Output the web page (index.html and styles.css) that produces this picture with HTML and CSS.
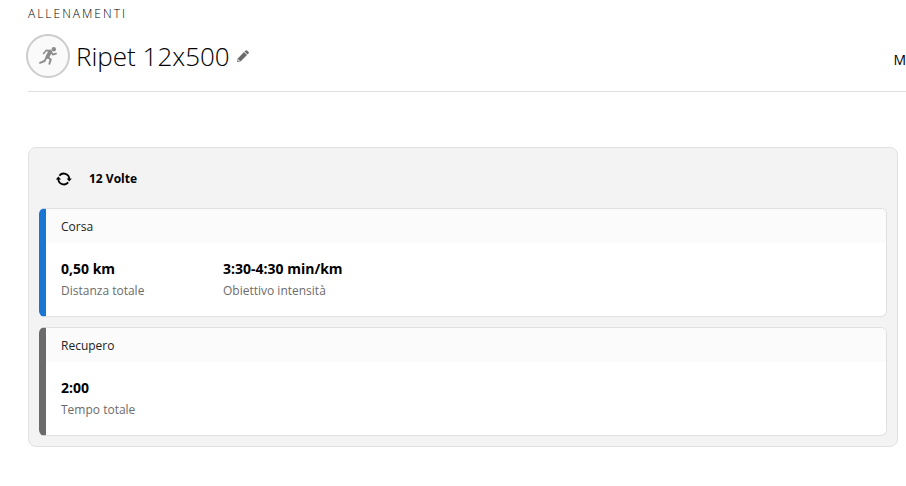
FILE: index.html
```html
<!DOCTYPE html>
<html lang="it">
<head>
    <meta charset="UTF-8">
    <meta name="viewport" content="width=device-width, initial-scale=1.0">
    <title>Ripet 12x500 - Allenamenti</title>
    <link rel="stylesheet" href="styles.css">
</head>
<body>
    <header class="page-header">
        <a href="#" class="breadcrumb">Allenamenti</a>
        <div class="title-row">
            <span class="sport-icon">
                <svg viewBox="0 0 20 20" width="20" height="20" aria-hidden="true">
                    <circle cx="15.8" cy="3.2" r="2.2" fill="#8c8c8c"/>
                    <path d="M5.6 7.4L8.2 4.4L12 4.8" fill="none" stroke="#8c8c8c" stroke-width="1.6" stroke-linejoin="round" stroke-linecap="round"/>
                    <path d="M12.2 5.6L9.4 10.8" stroke="#8c8c8c" stroke-width="3.8" stroke-linecap="round"/>
                    <path d="M13.4 6.4L14.8 8.6L18 7.6M9.8 11.2L12.8 13.4L11.4 17.8M8.4 11.6L6.6 15L2 16.8" fill="none" stroke="#8c8c8c" stroke-width="1.9" stroke-linejoin="round" stroke-linecap="round"/>
                </svg>
            </span>
            <h1>Ripet 12x500</h1>
            <button class="edit-button" aria-label="Modifica nome">
                <svg viewBox="0 0 12 12" width="12" height="12" aria-hidden="true">
                    <path d="M0 12L0.8 8.4L7 2L10 5L3.8 11.2Z" fill="#6b6b6b"/>
                    <path d="M7.6 1.5L8.7 0.4Q9.4 -0.1 10 0.4L11.6 2Q12.1 2.6 11.6 3.3L10.5 4.4Z" fill="#6b6b6b"/>
                    <path d="M1.3 9.2L2.8 10.7L1.1 11.1Z" fill="#fff"/>
                </svg>
            </button>
            <span class="header-action">M</span>
        </div>
    </header>

    <main class="workout">
        <div class="repeat-header">
            <svg class="repeat-icon" viewBox="0 0 16 14" width="16" height="14" aria-hidden="true">
                <path d="M3.4 3.6A5.6 5.6 0 0 1 13.3 7M12.2 10.4A5.6 5.6 0 0 1 2.3 7" fill="none" stroke="#000" stroke-width="1.8"/>
                <path d="M10.6 6.4H15.8L13.2 9.4ZM-0.2 7.6H5L2.4 4.6Z"/>
            </svg>
            <h2>12 Volte</h2>
        </div>

        <section class="step step-run">
            <h3>Corsa</h3>
            <div class="step-data">
                <div class="data-item">
                    <div class="value">0,50 km</div>
                    <div class="label">Distanza totale</div>
                </div>
                <div class="data-item">
                    <div class="value">3:30-4:30 min/km</div>
                    <div class="label">Obiettivo intensità</div>
                </div>
            </div>
        </section>

        <section class="step step-recovery">
            <h3>Recupero</h3>
            <div class="step-data">
                <div class="data-item">
                    <div class="value">2:00</div>
                    <div class="label">Tempo totale</div>
                </div>
            </div>
        </section>
    </main>
</body>
</html>
```
FILE: styles.css
```css
body {
    margin: 0;
    padding-left: 28px;
    background-color: #fff;
    color: #000;
    font-family: "Open Sans", "Noto Sans", sans-serif;
    font-size: 12px;
}

h1, h2, h3 {
    margin: 0;
}

.page-header {
    padding-top: 4px;
    border-bottom: 1px solid #e0e0e0;
}

.breadcrumb {
    display: block;
    color: #000;
    font-size: 12px;
    font-weight: 300;
    line-height: 20px;
    letter-spacing: 2px;
    text-transform: uppercase;
    text-decoration: none;
}

.title-row {
    display: flex;
    align-items: center;
    margin-left: -2px;
    padding: 10px 0 13px;
}

.sport-icon {
    display: flex;
    align-items: center;
    justify-content: center;
    box-sizing: border-box;
    width: 44px;
    height: 44px;
    margin-right: 6px;
    border: 2px solid #ccc;
    border-radius: 50%;
    background-color: #fafafa;
}

h1 {
    font-size: 26px;
    font-weight: 300;
    line-height: 44px;
}

.edit-button {
    display: flex;
    margin-left: 7px;
    padding: 0;
    border: none;
    background: none;
    cursor: pointer;
}

.header-action {
    margin-left: auto;
    font-size: 14px;
    line-height: 20px;
    padding-top: 8px;
}

.workout {
    margin: 55px 8px 0 0;
    padding: 0 10px 10px;
    border: 1px solid #e0e0e0;
    border-radius: 8px;
    background-color: #f3f3f3;
}

.repeat-header {
    display: flex;
    align-items: center;
    padding: 21px 0 19px 17px;
}

.repeat-icon {
    margin-right: 17px;
}

h2 {
    font-size: 12px;
    font-weight: 700;
    line-height: 20px;
}

.step {
    overflow: hidden;
    border: 1px solid #e0e0e0;
    border-left-width: 7px;
    border-radius: 6px;
    background-color: #fff;
}

.step-run {
    border-left-color: #1976d2;
}

.step-recovery {
    border-left-color: #6b6b6b;
}

.step + .step {
    margin-top: 10px;
}

h3 {
    padding: 9px 15px 7px;
    background-color: #fbfbfb;
    color: #222;
    font-size: 12px;
    font-weight: 400;
    line-height: 18px;
}

.step-data {
    display: flex;
    padding: 15px 15px 14px;
}

.data-item {
    min-width: 162px;
}

.value {
    font-size: 14px;
    font-weight: 700;
    line-height: 22px;
}

.label {
    color: #6b6b6b;
    font-size: 12px;
    line-height: 22px;
}
```
